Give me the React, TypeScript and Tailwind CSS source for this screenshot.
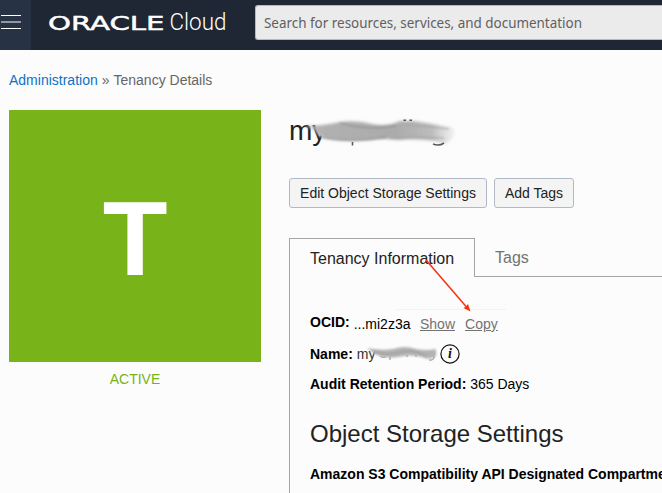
import React from "react";

function Header() {
  return (
    <header className="flex h-[50px] bg-[#1e2733]">
      <button aria-label="Menu" className="flex w-[31px] shrink-0 flex-col gap-[5px] bg-[#273244] pt-[15px] pl-px">
        <span className="h-px w-5 bg-white" />
        <span className="h-[2px] w-5 bg-[#93979d]" />
        <span className="h-px w-5 bg-white" />
      </button>
      <svg className="h-[50px] w-[224px] shrink-0" viewBox="31 0 224 50" fill="#fff">
        <text x="48" y="29.700" fontSize="20" fontFamily="DejaVu Sans, sans-serif" textLength="116.500" lengthAdjust="spacingAndGlyphs" stroke="#fff" strokeWidth="0.5">
          ORACLE
        </text>
        <text x="169.500" y="30" fontSize="23" fontWeight="300" fontFamily="Roboto, sans-serif" textLength="57" lengthAdjust="spacingAndGlyphs">
          Cloud
        </text>
      </svg>
      <div className="mt-[5px] flex h-[35px] flex-1 items-center rounded-l-[3px] border border-r-0 border-[#b3b9c8] bg-[#ebebeb] pl-2">
        <svg className="h-[33px] w-[340px]" viewBox="0 0 340 33">
          <text x="0" y="22" fontSize="14.5" fill="#606060" fontFamily="Noto Sans, sans-serif" textLength="318" lengthAdjust="spacingAndGlyphs">
            Search for resources, services, and documentation
          </text>
        </svg>
      </div>
    </header>
  );
}

function TitleSmudge() {
  return (
    <svg className="absolute top-0 left-0 h-[50px] w-[180px]" viewBox="289 110 180 50">
      <defs>
        <linearGradient id="titleFade" x1="0" x2="1">
          <stop offset="0" stopColor="#bbb" />
          <stop offset=".15" stopColor="#b0b0b0" />
          <stop offset=".45" stopColor="#adadad" />
          <stop offset=".6" stopColor="#aaa" />
          <stop offset=".85" stopColor="#bcbcbc" />
          <stop offset="1" stopColor="#d6d6d6" stopOpacity=".3" />
        </linearGradient>
        <filter id="titleBlur" x="-10%" y="-30%" width="120%" height="160%">
          <feGaussianBlur stdDeviation="1.5" />
        </filter>
        <filter id="softBlur">
          <feGaussianBlur stdDeviation=".9" />
        </filter>
      </defs>
      <path d="M316 123H328V137H322L318 132Z" fill="#fcfcfc" />
      <path d="M303 126 Q323 126 340 122 Q358 120 372 124 Q388 127 400 121 L414 121 L452 127 Q457 132 452 139 L445 144 L434 141 Q413 138 399 140 Q382 138 372 140 Q350 142 335 140 Q323 139 318 135 L314 129 Z" fill="url(#titleFade)" filter="url(#titleBlur)" />
      <g fill="none" filter="url(#softBlur)">
        <path d="M320 137 Q350 143 386 137 M340 123 Q365 131 396 126" stroke="#8b8b8b" />
        <path d="M405 125 Q428 126 449 129 M390 138 Q415 136 444 138" stroke="#a0a0a0" />
      </g>
      <path d="M352.500 142 V145.500 M433 144 Q439 146.500 444 143" fill="none" stroke="#5a5a5a" strokeWidth="1.6" />
      <path d="M403.500 119.500h2.500v1.500h-2.500z M409.500 119.500h2.500v1.500h-2.500z" fill="#555" />
    </svg>
  );
}

function NameSmudge() {
  return (
    <svg className="absolute top-0 left-0 h-6 w-[84px]" viewBox="356 343 84 24">
      <defs>
        <filter id="nameBlur" x="-10%" y="-30%" width="120%" height="160%">
          <feGaussianBlur stdDeviation="1" />
        </filter>
      </defs>
      <path d="M379 357 Q380 359 385 358 M389 357v4 M406 356v2 M415 356v2 M428 361 Q432 362 433 359 V353" fill="none" stroke="#888" />
      <path d="M366 349 Q380 352 392 350 Q404 346 415 350 Q426 352 435 350 V357 Q429 362 421 358 Q409 355 397 358 Q384 360 374 355 Z" fill="#b3b3b3" filter="url(#nameBlur)" />
      <path d="M373 353 Q388 357 400 353 Q413 350 425 357" fill="none" stroke="#929292" filter="url(#nameBlur)" />
    </svg>
  );
}

function InfoIcon() {
  return (
    <svg className="h-5 w-5" viewBox="0 0 20 20">
      <circle cx="10" cy="10" r="9.100" fill="none" stroke="#111" strokeWidth="1.2" />
      <text x="10" y="14" textAnchor="middle" fontSize="14" fontStyle="italic" fontWeight="700" fontFamily="Liberation Serif, serif" fill="#111">i</text>
    </svg>
  );
}

function Details() {
  return (
    <section className="relative h-[217px] border-l border-[#a5a5a5] pl-5 text-sm leading-5 text-black">
      <div className="flex h-[30px] items-start pt-[35px] whitespace-nowrap">
        <b>OCID:</b>
        <span className="mt-0.5 ml-1">...mi2z3a</span>
        <a className="mt-0.5 ml-[9.500px] text-[#737373] underline">Show</a>
        <a className="mt-0.5 ml-[10px] text-[#737373] underline">Copy</a>
      </div>
      <div className="mt-8 flex h-5 items-center">
        <b>Name:</b>
        <div className="relative ml-1 h-6 w-[83px] pt-0.5 text-[#333]">
          my
          <NameSmudge />
        </div>
        <InfoIcon />
      </div>
      <div className="mt-[10px] whitespace-nowrap"><b>Audit Retention Period:</b> 365 Days</div>
      <h2 className="mt-6 text-2xl leading-8 text-[#222] whitespace-nowrap">Object Storage Settings</h2>
      <div className="mt-[14px] font-bold whitespace-nowrap">Amazon S3 Compatibility API Designated Compartment:</div>
      <svg className="absolute -top-[22px] left-[106px] h-[60px] w-[114px]" viewBox="396 255 114 60">
        <path d="M396 309.500H506" stroke="#f3f3f3" />
        <path d="M426 260L466.500 307" stroke="#f5320f" strokeWidth="1.500" />
        <path d="M470.500 311.500L463.500 308L466 306.500L468 304Z" fill="#f5320f" />
      </svg>
    </section>
  );
}

export default function App() {
  return (
    <div className="h-[493px] w-[662px] overflow-hidden bg-[#fcfcfc] font-['Liberation_Sans',Arial,sans-serif]">
      <Header />
      <nav className="flex h-[60px] items-center gap-1 pl-[9px] text-sm text-[#666]">
        <a className="text-[#0c72c5]">Administration</a>
        <span>»</span>
        <span>Tenancy Details</span>
      </nav>
      <main className="flex pl-[9px]">
        <aside className="w-[252px] shrink-0">
          <div className="flex h-[252px] items-center justify-center bg-[#78b31a] text-[106px] leading-none font-bold text-white">
            <span className="pt-1">T</span>
          </div>
          <div className="mt-[7px] text-center text-sm leading-5 text-[#78b31a]">ACTIVE</div>
        </aside>
        <div className="ml-7 w-[373px] shrink-0">
          <h1 className="relative h-[68px] text-[28px] leading-[42px] text-[#222]">
            my
            <TitleSmudge />
          </h1>
          <div className="flex gap-[7px] text-sm text-[#222]">
            <button className="h-[30px] w-[198px] rounded-[3px] border border-[#b1b9c6] bg-[#f4f4f4]">Edit Object Storage Settings</button>
            <button className="h-[30px] w-[80px] rounded-[3px] border border-[#b1b9c6] bg-[#f4f4f4]">Add Tags</button>
          </div>
          <div className="mt-[30px] flex h-[39px] text-base">
            <div className="flex w-[186px] items-center border-t border-x border-[#a5a5a5] pl-5 pt-px text-[#222]">Tenancy Information</div>
            <div className="flex flex-1 items-center border-b border-[#a5a5a5] pt-0.5 pl-5 text-[#737373]">Tags</div>
          </div>
          <Details />
        </div>
      </main>
    </div>
  );
}
